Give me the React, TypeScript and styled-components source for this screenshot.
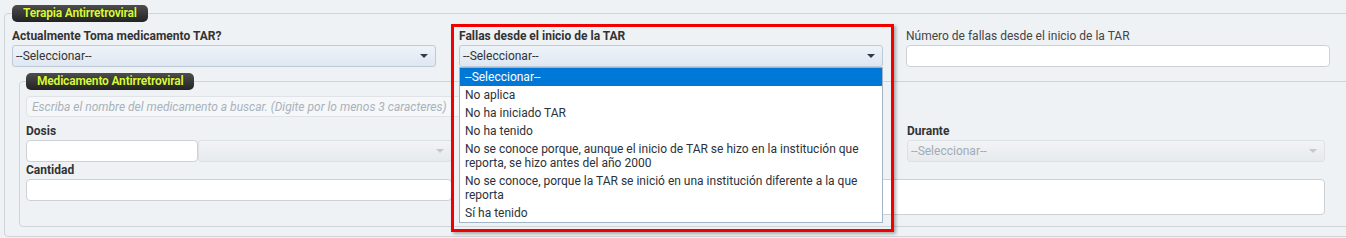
import styled, { createGlobalStyle } from 'styled-components'

const GlobalStyle = createGlobalStyle`
  html, body {
    margin: 0;
    padding: 0;
    background: #eff2f5;
    overflow: hidden;
  }
  body {
    font-family: Roboto, "Liberation Sans", Arial, sans-serif;
    font-size: 12px;
    color: #333;
  }
  * { box-sizing: border-box; }
`

const Panel = styled.fieldset`
  margin: 5px 0 0 4px;
  padding: 0 7px 9px;
  width: 1380px;
  min-width: 0;
  border: 1px solid #cfd4d9;
  border-radius: 4px;
`

const SubPanel = styled(Panel)`
  margin: 6px 0 0 7px;
  padding: 0 6px 11px;
  width: 1360px;
`

const Legend = styled.legend`
  height: 17px;
  padding: 0 11px;
  background: linear-gradient(#4d4d4d, #232323);
  border-radius: 5px;
  color: #d8f73a;
  font-size: 12px;
  font-weight: 700;
  line-height: 17px;
  letter-spacing: -0.2px;
  text-shadow: 0 0 1px rgba(0, 0, 0, 0.8);
`

const TopRow = styled.div`
  display: grid;
  grid-template-columns: repeat(3, 424px);
  column-gap: 23px;
  margin-top: 6px;
`

const SubGrid = styled.div`
  display: grid;
  width: 1299px;
  grid-template-columns: 426px 1fr 418px;
  column-gap: 24px;
  margin-top: 6px;
`

const Field = styled.div<{ $col?: string }>`
  position: relative;
  grid-column: ${p => p.$col || 'auto'};
`

const Label = styled.div<{ $light?: boolean }>`
  height: 16px;
  margin-bottom: 1px;
  line-height: 16px;
  font-weight: ${p => (p.$light ? 400 : 700)};
  color: ${p => (p.$light ? '#444' : '#333')};
  white-space: nowrap;
`

const SelectWrap = styled.div`
  position: relative;
  flex: 1;
`

const SelectBox = styled.div<{ $disabled?: boolean }>`
  display: flex;
  align-items: center;
  height: 22px;
  padding: 0 7px 0 3px;
  border: 1px solid ${p => (p.$disabled ? '#dde1e5' : '#bfcad8')};
  border-radius: 3px;
  background: ${p =>
    p.$disabled
      ? 'linear-gradient(#f1f3f5, #e7eaed)'
      : 'linear-gradient(#eef3f9, #dfe7f1)'};
  color: ${p => (p.$disabled ? '#a0abb7' : '#333')};
  white-space: nowrap;
`

const Caret = styled.span<{ $disabled?: boolean }>`
  margin-left: auto;
  width: 0;
  height: 0;
  border-left: 4px solid transparent;
  border-right: 4px solid transparent;
  border-top: 4px solid ${p => (p.$disabled ? '#c3c9d0' : '#2f3b4a')};
`

const Input = styled.input<{ $h?: number }>`
  display: block;
  width: 100%;
  height: ${p => p.$h || 22}px;
  margin: 0;
  padding: 0 5px;
  border: 1px solid #cdd1d5;
  border-radius: 4px;
  background: #fff;
  font: inherit;
  outline: none;
`

const Search = styled(Input)`
  grid-column: 1 / 3;
  height: 21px;
  margin-bottom: 6px;
  background: #f5f7f9;
  border-color: #dfe3e7;
  &::placeholder {
    color: #a9b2bc;
    font-style: italic;
  }
`

const Note = styled.textarea`
  display: block;
  width: 100%;
  height: 36px;
  margin: 0;
  border: 1px solid #cdd1d5;
  border-radius: 4px;
  background: #fff;
  resize: none;
  font: inherit;
  outline: none;
`

const InputGroup = styled.div`
  display: flex;
  & > input {
    width: 172px;
    flex: none;
  }
`

const OptionList = styled.ul`
  position: absolute;
  top: 100%;
  left: 0;
  right: 0;
  z-index: 5;
  margin: 0;
  padding: 0;
  list-style: none;
  background: #fff;
  border: 1px solid #a3b4c6;
`

const OptionItem = styled.li<{ $active?: boolean }>`
  padding: 2px 5px;
  line-height: 14px;
  background: ${p => (p.$active ? '#0078d7' : 'transparent')};
  color: ${p => (p.$active ? '#fff' : '#2c323b')};
`

const Highlight = styled.div`
  position: absolute;
  top: -4px;
  left: -8px;
  width: 443px;
  height: 208px;
  z-index: 6;
  border: 3px solid #f20000;
  box-shadow: 2px 2px 3px rgba(0, 0, 0, 0.3);
  pointer-events: none;
`

const options = [
  '--Seleccionar--',
  'No aplica',
  'No ha iniciado TAR',
  'No ha tenido',
  'No se conoce porque, aunque el inicio de TAR se hizo en la institución que reporta, se hizo antes del año 2000',
  'No se conoce, porque la TAR se inició en una institución diferente a la que reporta',
  'Sí ha tenido',
]

const Select = ({ value, disabled }: { value?: string; disabled?: boolean }) => (
  <SelectBox $disabled={disabled}>
    {value}
    <Caret $disabled={disabled} />
  </SelectBox>
)

export default function App() {
  return (
    <>
      <GlobalStyle />
      <Panel>
        <Legend>Terapia Antirretroviral</Legend>
        <TopRow>
          <Field>
            <Label>Actualmente Toma medicamento TAR?</Label>
            <Select value="--Seleccionar--" />
          </Field>
          <Field>
            <Label>Fallas desde el inicio de la TAR</Label>
            <SelectWrap>
              <Select value="--Seleccionar--" />
              <OptionList>
                {options.map((o, i) => (
                  <OptionItem key={o} $active={i === 0}>
                    {o}
                  </OptionItem>
                ))}
              </OptionList>
            </SelectWrap>
            <Highlight />
          </Field>
          <Field>
            <Label $light>Número de fallas desde el inicio de la TAR</Label>
            <Input readOnly />
          </Field>
        </TopRow>

        <SubPanel>
          <Legend>Medicamento Antirretroviral</Legend>
          <SubGrid>
            <Search
              readOnly
              placeholder="Escriba el nombre del medicamento a buscar. (Digite por lo menos 3 caracteres)"
            />
            <Field $col="1">
              <Label>Dosis</Label>
              <InputGroup>
                <Input readOnly />
                <SelectWrap>
                  <Select disabled />
                </SelectWrap>
              </InputGroup>
            </Field>
            <Field $col="3">
              <Label>Durante</Label>
              <Select value="--Seleccionar--" disabled />
            </Field>
            <Field $col="1">
              <Label>Cantidad</Label>
              <Input readOnly />
            </Field>
            <Field $col="2 / 4">
              <Label>&nbsp;</Label>
              <Note readOnly />
            </Field>
          </SubGrid>
        </SubPanel>
      </Panel>
    </>
  )
}
